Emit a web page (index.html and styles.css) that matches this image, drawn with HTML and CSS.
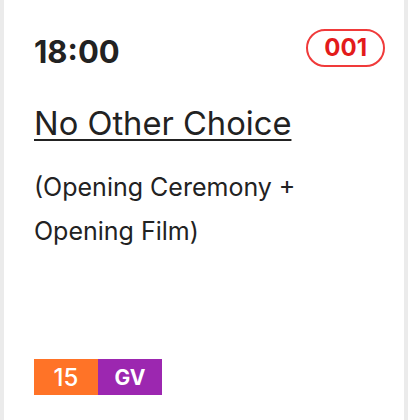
FILE: index.html
```html
<!DOCTYPE html>
<html lang="en">
<head>
  <meta charset="UTF-8">
  <title>Screening</title>
  <link rel="stylesheet" href="styles.css">
</head>
<body>
  <div class="card">
    <div class="card-head">
      <span class="time">18:00</span>
      <span class="code">001</span>
    </div>
    <a class="title" href="#">No Other Choice</a>
    <p class="note">(Opening Ceremony + Opening Film)</p>
    <div class="tags">
      <span class="tag tag-age">15</span>
      <span class="tag tag-venue">GV</span>
    </div>
  </div>
</body>
</html>
```

FILE: styles.css
```css
body {
  margin: 0; background: #ebebeb;
  font-family: Inter, 'Noto Sans', Arial, sans-serif; color: #222;
}
.card {
  background: white; margin: 0 4px; height: 420px; box-sizing: border-box;
  padding: 29px 19px 0 30px; display: flex; flex-direction: column;
}
.card-head { display: flex; justify-content: space-between; align-items: flex-start; }
.time { font-size: 31px; font-weight: 700; margin-top: 4px; }
.code {
  color: #e31b1b; font-size: 24px; font-weight: 700; border: 2px solid #f03a3a;
  border-radius: 20px; padding: 0 16px; line-height: 34px;
}
.title {
  color: #222; font-size: 32.7px; margin-top: 33px; align-self: flex-start;
  text-decoration-thickness: 2px; text-underline-offset: 4px;
}
.note { font-size: 25px; line-height: 44px; margin: 22px 0 0; }
.tags { display: flex; margin-top: auto; margin-bottom: 25px; }
.tag {
  width: 64px; height: 36px; display: flex; align-items: center; justify-content: center;
  color: white; font-size: 24px; font-weight: 500;
}
.tag-age { background: #ff7327; }
.tag-venue { background: #9c27b0; font-weight: 700; font-size: 21px; }
```
